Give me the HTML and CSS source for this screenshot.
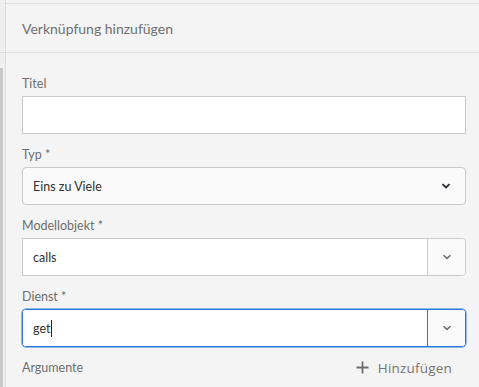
FILE: index.html
```html
<!DOCTYPE html>
<html lang="de">
<head>
<meta charset="utf-8">
<title>Verknüpfung hinzufügen</title>
<link rel="stylesheet" href="styles.css">
</head>
<body>
<div class="app">
  <div class="rail">
    <div class="rail-top"></div>
    <div class="rail-thumb"></div>
  </div>
  <section class="panel">
    <header class="panel-head">Verknüpfung hinzufügen</header>
    <div class="panel-body">
      <label class="field-label">Titel</label>
      <div class="textfield"></div>

      <label class="field-label">Typ *</label>
      <div class="select">
        <span class="value">Eins zu Viele</span>
        <svg class="chev dark" width="10" height="6" viewBox="0 0 10 6"><path d="M1.5 1.2l3.5 3.3 3.5-3.3" fill="none" stroke="currentColor" stroke-width="1.8"/></svg>
      </div>

      <label class="field-label">Modellobjekt *</label>
      <div class="combo">
        <div class="combo-input"><span class="value">calls</span></div>
        <div class="combo-btn"><svg class="chev" width="10" height="6" viewBox="0 0 10 6"><path d="M1.5 1.2l3.5 3.2 3.5-3.2" fill="none" stroke="currentColor" stroke-width="1.5"/></svg></div>
      </div>

      <label class="field-label">Dienst *</label>
      <div class="combo focused">
        <div class="combo-input"><span class="value">get</span><span class="caret"></span></div>
        <div class="combo-btn"><svg class="chev" width="10" height="6" viewBox="0 0 10 6"><path d="M1.5 1.2l3.5 3.2 3.5-3.2" fill="none" stroke="currentColor" stroke-width="1.5"/></svg></div>
      </div>

      <div class="args-row">
        <span class="field-label inline">Argumente</span>
        <button class="add-btn" type="button">
          <svg width="13" height="13" viewBox="0 0 13 13"><path d="M6.5 0.5v12M0.5 6.5h12" fill="none" stroke="currentColor" stroke-width="1.8"/></svg>
          <span>Hinzufügen</span>
        </button>
      </div>
    </div>
  </section>
</div>
</body>
</html>
```
FILE: styles.css
```css
html, body {
  margin: 0;
  padding: 0;
  height: 100%;
  background: #f4f4f4;
  overflow: hidden;
}
body {
  font-family: Lato, "Open Sans", sans-serif;
}
.app {
  display: flex;
  height: 100%;
}
.rail {
  width: 5px;
  border-right: 1px solid #dcdcdc;
  background: #efefef;
  display: flex;
  flex-direction: column;
}
.rail-top {
  height: 52px;
  border-bottom: 1px solid #dadada;
}
.rail-thumb {
  margin-top: 15px;
  width: 3px;
  flex: 1;
  background: #c9c9c9;
}
.panel {
  flex: 1;
  margin-top: 3px;
  border-top: 1px solid #dedede;
  background: #f4f4f4;
}
.panel-head {
  height: 49px;
  box-sizing: border-box;
  padding: 0 16px;
  display: flex;
  align-items: center;
  font-size: 14px;
  color: #707070;
  border-bottom: 1px solid #dedede;
}
.panel-body {
  padding: 10px 13px 0 16px;
}
.field-label {
  display: block;
  margin: 12px 0 4px;
  font-size: 12.5px;
  line-height: 17px;
  color: #6e6e6e;
}
.field-label.inline {
  margin: 0;
}
.textfield,
.select,
.combo {
  height: 38px;
  box-sizing: border-box;
}
.textfield {
  background: #fff;
  border: 1px solid #cacaca;
  border-radius: 0;
}
.select {
  display: flex;
  align-items: center;
  justify-content: space-between;
  padding: 0 14px 0 10px;
  background: #fafafa;
  border: 1px solid #cacaca;
  border-radius: 4px;
}
.value {
  font-size: 12.5px;
  color: #323232;
}
.chev { display: block; color: #6e6e6e; }
.chev.dark { color: #2c2c3a; }
.combo {
  display: flex;
  border: 1px solid #cacaca;
  border-radius: 0 4px 4px 0;
}
.combo-input {
  flex: 1;
  background: #fff;
  display: flex;
  align-items: center;
  padding-left: 10px;
}
.combo-btn {
  width: 37px;
  border-left: 1px solid #cacaca;
  background: #fafafa;
  border-radius: 0 3px 3px 0;
  display: flex;
  align-items: center;
  justify-content: center;
}
.combo.focused {
  border-color: #2d7ad6;
  border-radius: 4px;
  box-shadow: 0 0 0 0.5px #2d7ad6;
}
.combo.focused .combo-input { border-radius: 3px 0 0 3px; }
.combo.focused .combo-btn { border-left-color: #2d7ad6; }
.caret {
  width: 1px;
  height: 17px;
  background: #222;
  margin-left: 1px;
}
.args-row {
  margin-top: 12px;
  display: flex;
  justify-content: space-between;
  align-items: center;
  height: 17px;
}
.add-btn {
  display: flex;
  align-items: center;
  gap: 9px;
  margin-right: 14px;
  padding: 0;
  border: 0;
  background: none;
  font-family: "Open Sans", sans-serif;
  font-size: 13.5px;
  letter-spacing: 0.2px;
  color: #747474;
}
.add-btn svg { color: #6e6e6e; }
```
